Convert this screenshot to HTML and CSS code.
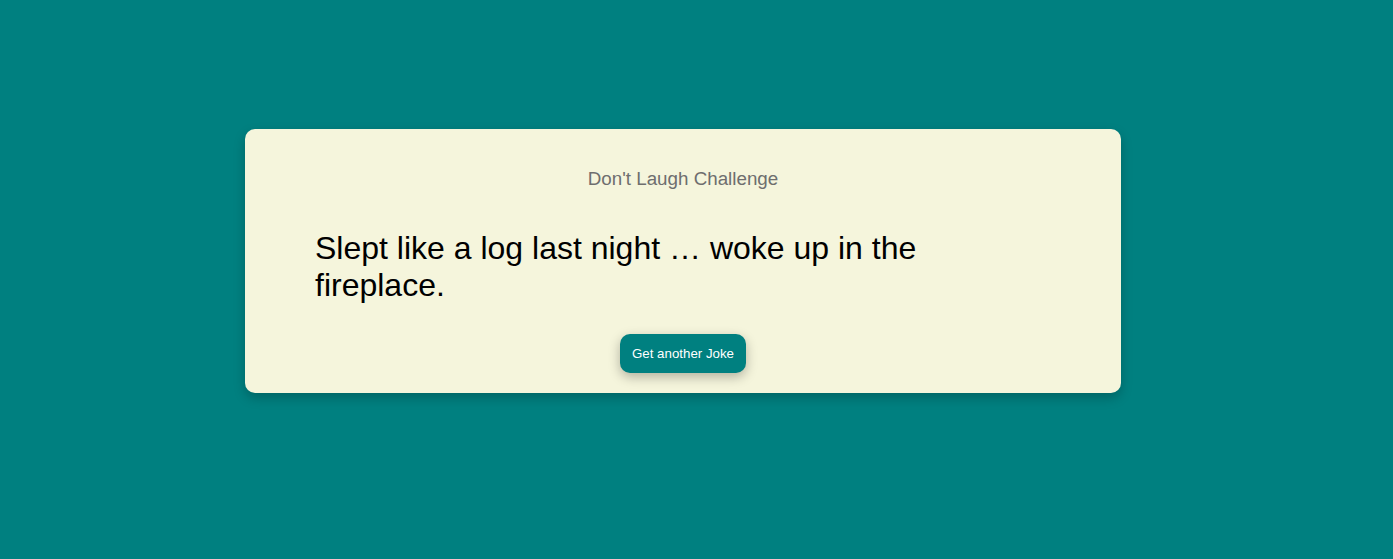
FILE: index.html
```html
<!DOCTYPE html>
<html lang="en">
<head>
<meta charset="utf-8">
<title>Don't Laugh Challenge</title>
<link rel="stylesheet" href="styles.css">
</head>
<body>
<main class="page">
  <section class="card">
    <h3 class="title">Don't Laugh Challenge</h3>
    <p class="joke">Slept like a log last night … woke up in the fireplace.</p>
    <button class="btn" type="button">Get another Joke</button>
  </section>
</main>
</body>
</html>
```

FILE: styles.css
```css
html, body {
  margin: 0;
  padding: 0;
  height: 100%;
}
body {
  background: #008080;
  font-family: "Liberation Sans", Arial, sans-serif;
}
.page {
  display: flex;
  justify-content: flex-start;
  padding: 129px 0 0 245px;
}
.card {
  box-sizing: border-box;
  width: 876px;
  height: 264px;
  background: #f5f5dc;
  border-radius: 10px;
  box-shadow: 0 5px 12px rgba(0, 0, 0, 0.22);
  padding: 38px 70px 20px;
  display: flex;
  flex-direction: column;
  align-items: center;
}
.title {
  margin: 0;
  font-size: 18.8px;
  font-weight: normal;
  color: #6e6e6e;
  line-height: 24px;
}
.joke {
  align-self: stretch;
  margin: 39px 0 0;
  font-size: 32px;
  line-height: 37px;
  color: #000;
  padding-right: 120px;
}
.btn {
  margin-top: auto;
  font-family: inherit;
  font-size: 13.3px;
  color: #fff;
  background: #008080;
  border: none;
  border-radius: 10px;
  padding: 0 12px;
  height: 39px;
  box-shadow: 0 4px 12px rgba(0, 0, 0, 0.28);
  cursor: pointer;
}
```
